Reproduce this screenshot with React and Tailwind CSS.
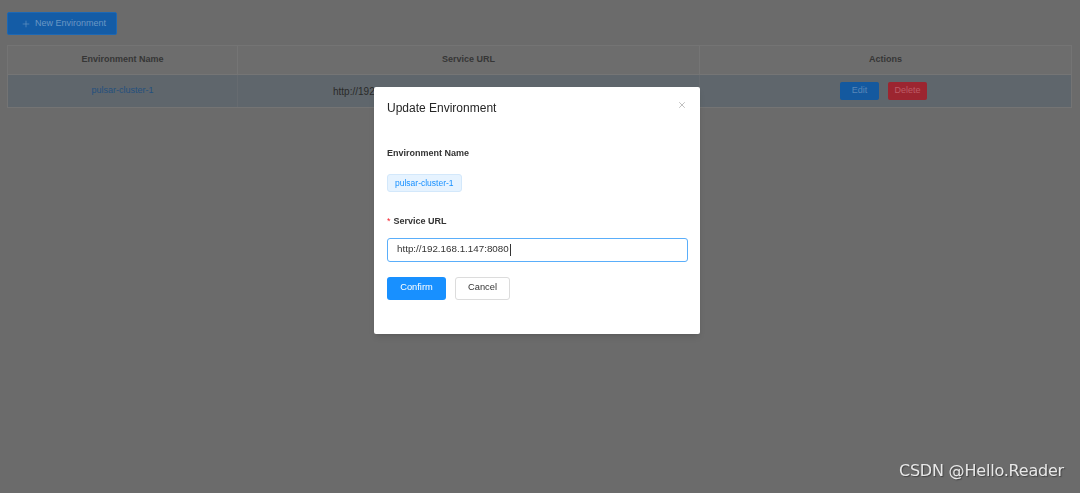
import React from "react";
import { Plus, X } from "lucide-react";

// dimmed page behind the modal
const EnvTable = () => (
  <div className="mt-[10px] w-[1065px] border border-[#747474]">
    <div className="grid grid-cols-[230px_462px_1fr] h-[29px] bg-[#6d6d6d] border-b border-[#757575] text-[9px] font-bold text-[#363636]">
      <div className="flex items-center justify-center border-r border-[#757575]">Environment Name</div>
      <div className="flex items-center justify-center border-r border-[#757575]">Service URL</div>
      <div className="flex items-center justify-center">Actions</div>
    </div>
    <div className="grid grid-cols-[230px_462px_1fr] h-[32px] bg-[#5f666c] text-[9px]">
      <div className="flex items-center justify-center border-r border-[#666b70] text-[#24507e] text-[9px]">pulsar-cluster-1</div>
      <div className="flex items-center pl-[95px] border-r border-[#666b70] text-[#2a2a2a] text-[10px]">http://192.168.1.147:8080</div>
      <div className="flex items-center justify-center gap-[9px] pr-[4px]">
        <button className="w-[39px] h-[18px] rounded-[2px] bg-[#14599f] text-[#5887b8] text-[9px]">Edit</button>
        <button className="w-[39px] h-[18px] rounded-[2px] bg-[#9c2530] text-[#bd5c66] text-[9px]">Delete</button>
      </div>
    </div>
  </div>
);

const UpdateModal = () => (
  <div className="fixed inset-0">
    <div className="absolute left-[374px] top-[87px] w-[326px] h-[247px] bg-white rounded-[2px] shadow-md px-[13px]">
      <div className="flex items-center justify-between h-[40px] pt-[2px]">
        <span className="text-[12px] text-[#262626]">Update Environment</span>
        <X className="w-[10px] h-[10px] mb-[6px] text-[#9a9a9a]" strokeWidth={1.5} />
      </div>
      <div className="mt-[19px] text-[9px] font-bold text-[#333] leading-[14px]">Environment Name</div>
      <div className="mt-[14px] inline-flex items-center h-[18px] px-[7px] rounded-[3px] bg-[#e6f3ff] border border-[#d3e8fb] text-[8.5px] text-[#1890ff]">
        pulsar-cluster-1
      </div>
      <div className="mt-[21px] flex items-center gap-[3px] text-[9px] font-bold text-[#333] leading-[14px]">
        <span className="text-[#f5222d] font-normal text-[9px]">*</span>
        Service URL
      </div>
      <div className="mt-[10px] h-[24px] w-[301px] flex items-center px-[9px] border border-[#5aaefa] rounded-[3px] text-[9.8px] text-[#333]">
        http://192.168.1.147:8080
        <span className="inline-block w-px h-[12px] bg-[#333] ml-px"></span>
      </div>
      <div className="mt-[15px] flex gap-[9px]">
        <button className="w-[59px] h-[23px] rounded-[3px] bg-[#1890ff] text-white text-[9.3px]">Confirm</button>
        <button className="w-[55px] h-[23px] rounded-[3px] border border-[#dcdcdc] bg-white text-[#333] text-[9.3px]">Cancel</button>
      </div>
    </div>
  </div>
);

const App = () => {
  return (
    <div className="relative min-h-screen h-[493px] bg-[#6b6b6b] px-[7px] pt-[12px] overflow-hidden font-['Liberation_Sans',Arial,sans-serif]">
      <button className="flex items-center gap-[4px] h-[23px] w-[110px] pl-[13px] rounded-[2px] bg-[#145ca6] border border-[#1d68b4] text-[9px] text-[#6b97c4]">
        <Plus className="w-[10px] h-[10px]" strokeWidth={1.5} />
        New Environment
      </button>
      <EnvTable />
      <UpdateModal />
      <div className="absolute right-[16px] bottom-[10px] text-[16px] text-[#e8e8e8] [text-shadow:1px_1px_1px_#444] font-['DejaVu_Sans',sans-serif] tracking-[-0.2px]">
        CSDN @Hello.Reader
      </div>
    </div>
  );
};

export default App;
